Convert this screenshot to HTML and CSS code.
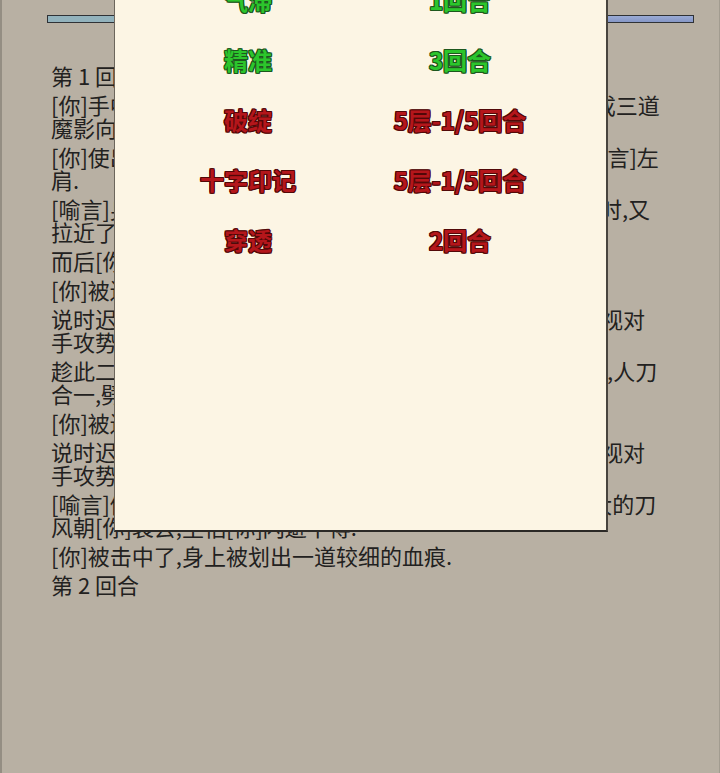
FILE: index.html
```html
<!DOCTYPE html>
<html lang="zh">
<head>
<meta charset="utf-8">
<title>战斗记录</title>
<link rel="stylesheet" href="styles.css">
</head>
<body>
<div class="screen">
  <div class="hpbars">
    <div class="bar bar-self"></div>
    <div class="bar bar-foe"></div>
  </div>
  <div class="log">
    <p>第 1 回合</p>
    <p><span class="ln">[你]手中长刀一道刀光如匹练般斩出刀势陡然一分为三化成三道</span><span class="ln">魔影向对手当头罩下.</span></p>
    <p><span class="ln">[你]使出一招横扫千军,刀锋带着凛冽寒光斜斩而下直取[喻言]左</span><span class="ln">肩.</span></p>
    <p><span class="ln">[喻言]身形一晃,踏出诡异步法向后急退数步避开锋芒的同时,又</span><span class="ln">拉近了双方之间的距离.</span></p>
    <p>而后[你]再度挥刀斩向对手.</p>
    <p>[你]被迫后撤.</p>
    <p><span class="ln">说时迟那时快只见寒光一闪你急忙屏住了呼吸凝神紧紧注视对</span><span class="ln">手攻势的变化.</span></p>
    <p><span class="ln">趁此二人错身而过的一瞬间,你猛然提气发力纵身向前突进,人刀</span><span class="ln">合一,劈向对手.</span></p>
    <p>[你]被迫连退三步.</p>
    <p><span class="ln">说时迟那时快对方刀势再变你不敢有丝毫大意凝神紧紧注视对</span><span class="ln">手攻势的变化.</span></p>
    <p><span class="ln">[喻言]仰天长啸,双手握紧刀柄,手中长刀猛然劈出,一道宽大的刀</span><span class="ln">风朝[你]袭去,生怕[你]闪避不得.</span></p>
    <p>[你]被击中了,身上被划出一道较细的血痕.</p>
    <p>第 2 回合</p>
  </div>

  <div class="modal">
    <div class="buffs">
      <div class="buff good">气滞</div><div class="buff good">1回合</div>
      <div class="buff good">精准</div><div class="buff good">3回合</div>
      <div class="buff bad">破绽</div><div class="buff bad">5层-1/5回合</div>
      <div class="buff bad">十字印记</div><div class="buff bad">5层-1/5回合</div>
      <div class="buff bad">穿透</div><div class="buff bad">2回合</div>
    </div>
  </div>
</div>
</body>
</html>
```

FILE: styles.css
```css
html, body {
  margin: 0;
  padding: 0;
  background: #b8b0a3;
}

.screen {
  position: relative;
  height: 773px;
  overflow: hidden;
  box-sizing: border-box;
  border-left: 2px solid #948e83;
  border-right: 1px solid #a29c90;
  background: #b8b0a3;
  font-family: "Noto Sans CJK SC", "Noto Sans", sans-serif;
  color: #222120;
}

.hpbars {
  display: flex;
  margin: 15px 0 0 45px;
  width: 647px;
  height: 8px;
}

.bar {
  flex: 1;
  box-sizing: border-box;
  border: 1.5px solid #2f3236;
}

.bar-self {
  background: #92b2bc;
}

.bar-foe {
  background: linear-gradient(#9aabd6, #8697c6);
}

.log {
  padding: 41px 0 0 49px;
  font-size: 22px;
  line-height: 23px;
}

.log p {
  margin: 0 0 6px;
  white-space: nowrap;
}

.ln {
  display: block;
}

.modal {
  position: absolute;
  left: 112px;
  top: -40px;
  width: 494px;
  height: 572px;
  box-sizing: border-box;
  background: #fcf5e4;
  border-left: 1.5px solid #6c665c;
  border-right: 2px solid #48443e;
  border-bottom: 2px solid #2b2926;
  padding: 10px 0 0 27px;
}

.buffs {
  display: grid;
  grid-template-columns: 212px 212px;
  grid-auto-rows: 60px;
  align-items: center;
  justify-items: center;
}

.buff {
  font-family: "Noto Sans CJK SC", sans-serif;
  font-weight: 700;
  font-size: 24px;
  line-height: 30px;
}

.good {
  color: #2cc52c;
  text-shadow: 1px 0 0 #1d571d, -1px 0 0 #1d571d, 0 1px 0 #1d571d, 0 -1px 0 #1d571d,
               1px 1px 0 #1d571d, -1px -1px 0 #1d571d, 1px -1px 0 #1d571d, -1px 1px 0 #1d571d;
}

.bad {
  color: #b4161b;
  text-shadow: 1px 0 0 #520808, -1px 0 0 #520808, 0 1px 0 #520808, 0 -1px 0 #520808,
               1px 1px 0 #520808, -1px -1px 0 #520808, 1px -1px 0 #520808, -1px 1px 0 #520808;
}
```
